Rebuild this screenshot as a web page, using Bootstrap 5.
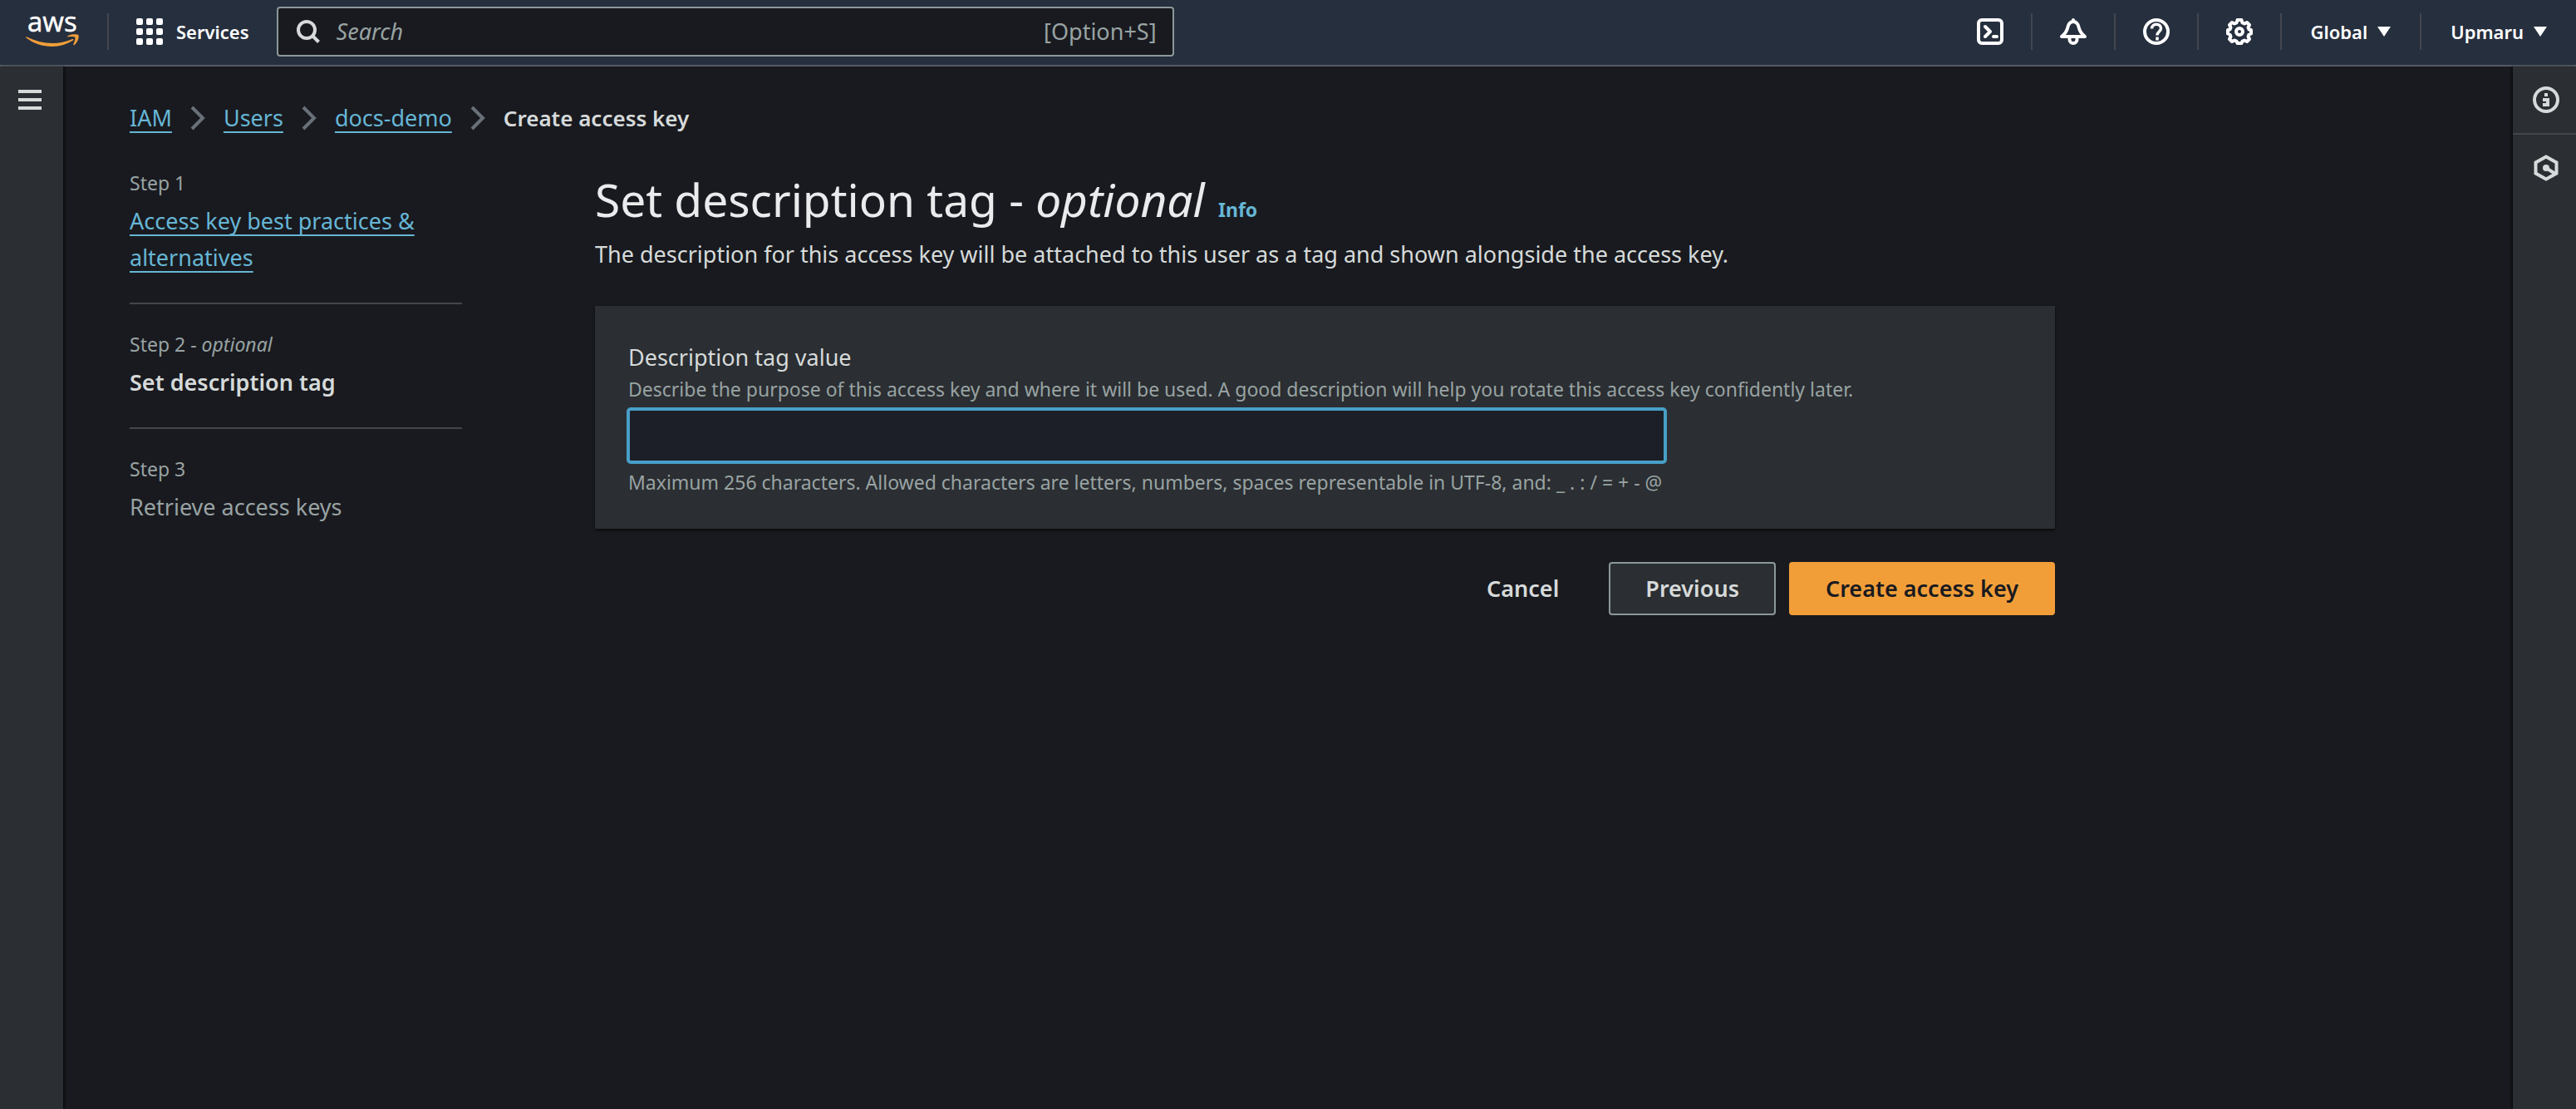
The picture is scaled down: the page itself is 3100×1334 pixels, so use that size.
<!DOCTYPE html>
<html lang="en" data-bs-theme="dark">
<head>
<meta charset="utf-8">
<meta name="viewport" content="width=device-width, initial-scale=1">
<title>Create access key | IAM</title>
<link href="https://cdn.jsdelivr.net/npm/bootstrap@5.3.0/dist/css/bootstrap.min.css" rel="stylesheet">
<style>
  :root {
    --page: #191a1f; --panel: #2b2e32; --top: #262f3e; --line: #42464f;
    --text: #d6dada; --muted: #98a3a3; --link: #66b6d5; --focus: #489fc8; --accent: #f19e39;
  }
  body { background: var(--page); color: var(--text); font-family: "Noto Sans", "Open Sans", sans-serif; font-size: 27px; line-height: 44px; }
  svg { display: block; flex: none; overflow: visible; }
  a { color: var(--link); text-decoration-thickness: 2px; text-underline-offset: 6px; text-decoration-skip-ink: none; }
  a:hover { color: #99cbe4; }

  .topbar { background: var(--top); border-bottom: 2px solid #545b64; height: 80px; padding: 0 0 2px; color: #fff; font-size: 22px; font-weight: 600; }
  .topbar .btn { --bs-btn-padding-x: 35px; --bs-btn-padding-y: 0; --bs-btn-color: #fff; --bs-btn-border-width: 0; --bs-btn-font-size: 22px; --bs-btn-font-weight: 600; --bs-btn-line-height: 44px; height: 44px; }
  .topbar .menu-item { gap: 12px; }
  .split { border-right: 2px solid var(--line); }
  .topbar .icon-item { --bs-btn-padding-x: 33px; }
  .topbar .services-item { --bs-btn-padding-x: 33px; }
  .brand-link { padding: 0 32px 0 30px; height: 44px; }
  .search-box { width: 1080px; height: 60px; border: 2px solid #8b9898; border-radius: 4px; background: var(--page); color: var(--muted); padding: 0 19px 0 22px; font-size: 27px; font-weight: 400; }
  .search-box input { background: none; border: 0; padding: 0 0 0 20px; color: var(--text); font-size: 27px; line-height: 44px; min-width: 0; }
  .search-box input:focus { background: none; box-shadow: none; }
  .search-box input::placeholder { color: var(--muted); font-style: italic; opacity: 1; }

  .rail { background: var(--panel); width: 76px; flex: none; }
  .rail .btn { height: 80px; border: 0; border-radius: 0; padding: 0; width: 100%; color: var(--text); }
  .rail-left { box-shadow: 2px 0 2px #0008; }
  .rail-left .btn { padding-right: 4px; }
  .rail-right { box-shadow: -2px 0 2px #0008; }
  .rail-right .btn { padding-left: 4px; }
  .rail-right .btn + .btn { border-top: 2px solid var(--line); height: 82px; }

  .page-body { padding: 40px 80px; min-width: 0; }
  .breadcrumb { --bs-breadcrumb-font-size: 27px; }
  .breadcrumb li { display: flex; align-items: center; }
  .breadcrumb svg { margin: 0 22px; }
  .breadcrumb [aria-current] { font-size: 26px; font-weight: 600; }

  .layout { gap: 160px; }
  .steps { width: 400px; flex: none; color: var(--muted); }
  .steps li + li { border-top: 2px solid var(--line); padding-top: 32px; margin-top: 32px; }
  .caption-text { font-size: 23px; line-height: 32px; color: var(--muted); }
  .step-now { color: var(--text); font-weight: 600; }
  .content { max-width: 1757px; min-width: 0; }
  h1 { font-size: 55px; line-height: 72px; font-weight: 400; color: #e9ebed; }
  .info-link { font-size: 23px; line-height: 32px; font-weight: 700; text-decoration: none; margin-left: 2px; }
  .form-panel { background: var(--panel); border: 0; border-radius: 0; box-shadow: 0 2px 3px #000a; --bs-card-spacer-x: 40px; --bs-card-spacer-y: 40px; color: var(--text); }
  .tag-input, .tag-input:focus { max-width: 1248px; height: 64px; border: 2px solid var(--focus); border-radius: 3px; box-shadow: 0 0 0 2px var(--focus); background: #1c1f28; color: var(--text); font-size: 27px; }
  .actions .btn { --bs-btn-padding-x: 42px; --bs-btn-padding-y: 8px; --bs-btn-border-width: 2px; --bs-btn-border-radius: 4px; --bs-btn-font-size: 27px; --bs-btn-line-height: 44px; --bs-btn-font-weight: 600; --bs-btn-color: var(--text); }
  .actions .btn-prev { --bs-btn-bg: var(--panel); --bs-btn-border-color: #8b9898; }
  .actions .btn-create { --bs-btn-bg: var(--accent); --bs-btn-border-color: var(--accent); --bs-btn-color: #191a1f; --bs-btn-hover-bg: #e88b1b; --bs-btn-hover-color: #191a1f; }
</style>
</head>
<body class="d-flex flex-column min-vh-100">
<header class="topbar d-flex align-items-center justify-content-between">
  <div class="d-flex align-items-center">
    <a class="brand-link split" href="#" aria-label="AWS home">
      <svg width="67" height="44" viewBox="0 0 67 44">
        <text x="3" y="22" font-family="Open Sans, sans-serif" font-size="33" font-weight="400" fill="#fff" stroke="#fff" stroke-width=".5">aws</text>
        <path d="M1.500 27.500C10 34 21 38 33 38c9 0 18-3 25-7.500 1.200-.8.200-2-1-1.500C49 32.500 41 34 34 34 22 34 11.500 31 2.500 26.500c-1-.5-1.800.3-1 1z" transform="translate(0 2)" fill="#f19e39"/>
        <path d="M51 27.500c4-2.800 10.500-2.600 13-1.800 2 1.800-.3 9-4.500 12.300-.8.700-1.600.2-1.200-.7 1.200-2.800 2.800-7.300 2-8.600-.9-1.200-5.600-.8-8.300-.4-1 .1-1.400-.4-1-.8z" fill="#f19e39"/>
      </svg>
    </a>
    <button class="btn services-item d-flex align-items-center" type="button">
      <svg width="32" height="32" fill="#fff" class="me-3"><rect width="8" height="8" rx="2"/><rect x="12" width="8" height="8" rx="2"/><rect x="24" width="8" height="8" rx="2"/><rect y="12" width="8" height="8" rx="2"/><rect x="12" y="12" width="8" height="8" rx="2"/><rect x="24" y="12" width="8" height="8" rx="2"/><rect y="24" width="8" height="8" rx="2"/><rect x="12" y="24" width="8" height="8" rx="2"/><rect x="24" y="24" width="8" height="8" rx="2"/></svg>
      Services
    </button>
    <label class="search-box d-flex align-items-center">
      <svg width="28" height="28" fill="none" stroke="#d6dada" stroke-width="4"><circle cx="12" cy="12" r="10"/><path d="M18.500 18.500l8 8"/></svg>
      <input class="form-control flex-grow-1" type="search" placeholder="Search" aria-label="Search">
      <span>[Option+S]</span>
    </label>
  </div>
  <div class="d-flex align-items-center">
    <div class="split"><button class="btn icon-item d-flex align-items-center" type="button" aria-label="CloudShell">
      <svg width="32" height="32" fill="none" stroke="#fff" stroke-width="4" stroke-linecap="round" stroke-linejoin="round"><rect x="2" y="2" width="28" height="28" rx="4"/><path d="M10 10l6 6-6 6M20 22h4"/></svg></button></div>
    <div class="split"><button class="btn icon-item d-flex align-items-center" type="button" aria-label="Notifications">
      <svg width="32" height="32" fill="none" stroke="#fff" stroke-width="4" stroke-linejoin="round" stroke-linecap="round"><path d="M16 2v2M2 22h28c-5-4-6-6-7-10-1-5-3-8-7-8s-6 3-7 8c-1 4-2 6-7 10zM11.500 23v2.500c0 6 9 6 9 0V23"/></svg></button></div>
    <div class="split"><button class="btn icon-item d-flex align-items-center" type="button" aria-label="Help">
      <svg width="32" height="32" fill="none" stroke="#fff" stroke-width="4"><circle cx="16" cy="16" r="14"/><path stroke-width="3.500" d="M10.500 12.500c0-7 11-7 11-.5 0 4-4.500 4-4.500 8.500M17 22.500v4"/></svg></button></div>
    <div class="split"><button class="btn icon-item d-flex align-items-center" type="button" aria-label="Settings">
      <svg width="32" height="32" fill="none" stroke="#fff" stroke-width="4" stroke-linejoin="round"><path d="M13.500 2h5l1 3.500 2.500 1L25 5l3 3-1.500 3 1 2.500L30 14v4.500l-2.500 1-1 2.500 1.500 3-3 3-3-1.500-2.500 1-1 2.500h-5l-1-2.500-2.500-1L7 28l-3-3 1.500-3-1-2.500L2 18.500V14l2.500-.5 1-2.500L4 8l3-3 3 1.500 2.500-1z"/><circle cx="16" cy="16" r="4"/></svg></button></div>
    <div class="split"><button class="btn menu-item d-flex align-items-center" type="button">Global<svg width="16" height="12" fill="#fff"><path d="M0 0h16L8 12z"/></svg></button></div>
    <button class="btn menu-item d-flex align-items-center" type="button">Upmaru<svg width="16" height="12" fill="#fff"><path d="M0 0h16L8 12z"/></svg></button>
  </div>
</header>

<div class="d-flex flex-grow-1">
  <aside class="rail rail-left">
    <button class="btn" type="button" aria-label="Open navigation">
      <svg width="28" height="24" fill="#d6dada" class="mx-auto"><rect width="28" height="4"/><rect y="10" width="28" height="4"/><rect y="20" width="28" height="4"/></svg>
    </button>
  </aside>

  <main class="page-body flex-grow-1">
    <nav aria-label="Breadcrumb">
      <ol class="breadcrumb mb-0">
        <li><a href="#">IAM</a><svg width="18" height="30" fill="none" stroke="#687078" stroke-width="4"><path d="M2 2l13 13L2 28"/></svg></li>
        <li><a href="#">Users</a><svg width="18" height="30" fill="none" stroke="#687078" stroke-width="4"><path d="M2 2l13 13L2 28"/></svg></li>
        <li><a href="#">docs-demo</a><svg width="18" height="30" fill="none" stroke="#687078" stroke-width="4"><path d="M2 2l13 13L2 28"/></svg></li>
        <li aria-current="page">Create access key</li>
      </ol>
    </nav>

    <div class="layout d-flex align-items-start mt-4 pt-3">
      <ol class="steps list-unstyled mb-0">
        <li><div class="caption-text mb-2">Step 1</div><a href="#">Access key best practices &amp; alternatives</a></li>
        <li><div class="caption-text mb-2">Step 2 - <em>optional</em></div><div class="step-now">Set description tag</div></li>
        <li><div class="caption-text mb-2">Step 3</div><div>Retrieve access keys</div></li>
      </ol>

      <form class="content flex-grow-1">
        <h1 class="mb-2">Set description tag - <em>optional</em> <a class="info-link" href="#">Info</a></h1>
        <p class="mb-4 pb-3">The description for this access key will be attached to this user as a tag and shown alongside the access key.</p>

        <div class="form-panel card">
          <div class="card-body">
            <label class="d-block" for="tagValue">Description tag value</label>
            <div class="caption-text" id="tagHint">Describe the purpose of this access key and where it will be used. A good description will help you rotate this access key confidently later.</div>
            <input class="tag-input form-control my-2" id="tagValue" type="text" maxlength="256" aria-describedby="tagHint tagRule">
            <div class="caption-text" id="tagRule">Maximum 256 characters. Allowed characters are letters, numbers, spaces representable in UTF-8, and: _ . : / = + - @</div>
          </div>
        </div>

        <div class="actions d-flex justify-content-end gap-3 mt-4 pt-3">
          <button class="btn" type="button">Cancel</button>
          <button class="btn btn-prev" type="button">Previous</button>
          <button class="btn btn-create" type="submit">Create access key</button>
        </div>
      </form>
    </div>
  </main>

  <aside class="rail rail-right">
    <button class="btn" type="button" aria-label="Info panel">
      <svg width="32" height="32" class="mx-auto" fill="none" stroke="#d6dada" stroke-width="4"><circle cx="16" cy="16" r="14"/><path d="M14 10h4M12 16h6v6M12 22h8"/></svg>
    </button>
    <button class="btn" type="button" aria-label="Tutorials">
      <svg width="32" height="32" class="mx-auto" fill="none" stroke="#d6dada" stroke-width="4"><path d="M16 2.500l12.500 7v13L16 29.500l-12.500-7v-13zM16 16l11 7"/><circle cx="16" cy="16" r="4" fill="#d6dada" stroke="none"/></svg>
    </button>
  </aside>
</div>
<script src="https://cdn.jsdelivr.net/npm/bootstrap@5.3.0/dist/js/bootstrap.bundle.min.js"></script>
</body>
</html>
